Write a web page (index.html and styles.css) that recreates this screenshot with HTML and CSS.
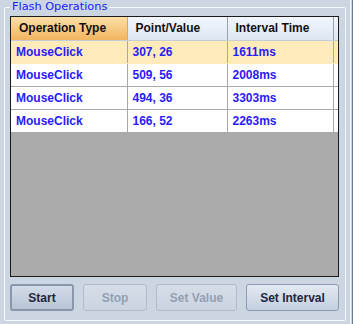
FILE: index.html
```html
<!DOCTYPE html>
<html lang="en">
<head>
    <meta charset="UTF-8">
    <title>Flash Operations</title>
    <link rel="stylesheet" href="styles.css">
</head>
<body>
    <fieldset class="group">
        <legend class="group-title">Flash Operations</legend>
        <div class="table-pane">
            <table class="ops">
                <thead>
                    <tr>
                        <th class="col-type sorted">Operation Type</th>
                        <th class="col-point">Point/Value</th>
                        <th class="col-time">Interval Time</th>
                        <th class="col-rest"></th>
                    </tr>
                </thead>
                <tbody>
                    <tr class="selected">
                        <td>MouseClick</td>
                        <td>307, 26</td>
                        <td>1611ms</td>
                        <td></td>
                    </tr>
                    <tr>
                        <td>MouseClick</td>
                        <td>509, 56</td>
                        <td>2008ms</td>
                        <td></td>
                    </tr>
                    <tr>
                        <td>MouseClick</td>
                        <td>494, 36</td>
                        <td>3303ms</td>
                        <td></td>
                    </tr>
                    <tr>
                        <td>MouseClick</td>
                        <td>166, 52</td>
                        <td>2263ms</td>
                        <td></td>
                    </tr>
                </tbody>
            </table>
        </div>
        <div class="buttons">
            <button class="btn btn-start">Start</button>
            <button class="btn btn-stop" disabled>Stop</button>
            <button class="btn btn-value" disabled>Set Value</button>
            <button class="btn btn-interval">Set Interval</button>
        </div>
    </fieldset>
    <div class="side-edge"></div>
</body>
</html>
```

FILE: styles.css
```css
html,
body {
    margin: 0;
    height: 100%;
}

body {
    background-color: #ccd6e3;
    font-family: 'Liberation Sans', Arial, sans-serif;
    display: flex;
    overflow: hidden;
}

.group {
    box-sizing: border-box;
    width: 342px;
    height: 321px;
    margin: 0 0 0 4px;
    padding: 0 6px 0 5px;
    border: 1px solid #f4f7fb;
    border-radius: 2px;
    display: flex;
    flex-direction: column;
}

/* titulo do grupo, um pouco mais pesado que o Liberation normal */
.group-title {
    padding: 0 2px;
    font-family: 'DejaVu Sans', sans-serif;
    font-size: 11.3px;
    line-height: 14px;
    color: #1a1aff;
}

.table-pane {
    margin-top: 2px;
    height: 261px;
    box-sizing: border-box;
    border: 1px solid #1b1b1b;
    background-color: #ababab;
}

.ops {
    width: 327px;
    border-collapse: collapse;
    table-layout: fixed;
    font-size: 12px;
    font-weight: bold;
}

.ops th {
    height: 23px;
    padding: 0 0 0 8px;
    text-align: left;
    color: #111;
    background: linear-gradient(#f2f6fc, #dde6f3);
    border-right: 1px solid #9aa3b0;
    border-bottom: 1px solid #c4ccd8;
    box-sizing: border-box;
}

.ops th.sorted {
    background: linear-gradient(#fbdfa8, #f2b45e);
    border-right: 1px solid #e2a65a;
}

.col-type {
    width: 116px;
}

.col-point {
    width: 100px;
}

.col-time {
    width: 106px;
}

.ops th.col-rest {
    border-right: none;
    padding: 0;
}

.ops td {
    height: 23px;
    padding: 0 0 0 5px;
    color: #2a1aff;
    background-color: #fff;
    border-right: 1px solid #a8a8a8;
    border-bottom: 1px solid #a8a8a8;
    box-sizing: border-box;
}

.ops td:last-child {
    border-right: none;
    padding: 0;
}

.ops tr.selected td {
    background-color: #feebb9;
    border-bottom-color: #feebb9;
}

.buttons {
    display: flex;
    gap: 9px;
    margin-top: 7px;
}

.btn {
    height: 27px;
    box-sizing: border-box;
    padding: 0;
    font-family: 'Liberation Sans', Arial, sans-serif;
    font-size: 12px;
    font-weight: bold;
    color: #1c2740;
    border: 1px solid #8d9bb0;
    border-radius: 3px;
    background: linear-gradient(#e3e9f2, #c4cfdf);
}

.btn-start {
    width: 64px;
    border: 2px solid #8a97ab;
    background: linear-gradient(#d2dbe8, #b8c4d6);
}

.btn-stop {
    width: 64px;
}

.btn-value {
    width: 81px;
}

.btn-interval {
    width: 93px;
}

.btn:disabled {
    color: #93a0b2;
    border-color: #b1bccb;
    background: linear-gradient(#d5dde8, #cad4e1);
}

.side-edge {
    margin-left: 4px;
    width: 2px;
    border-left: 1px solid #f4f7fb;
    border-right: 1px solid #6f7a8a;
}
```
